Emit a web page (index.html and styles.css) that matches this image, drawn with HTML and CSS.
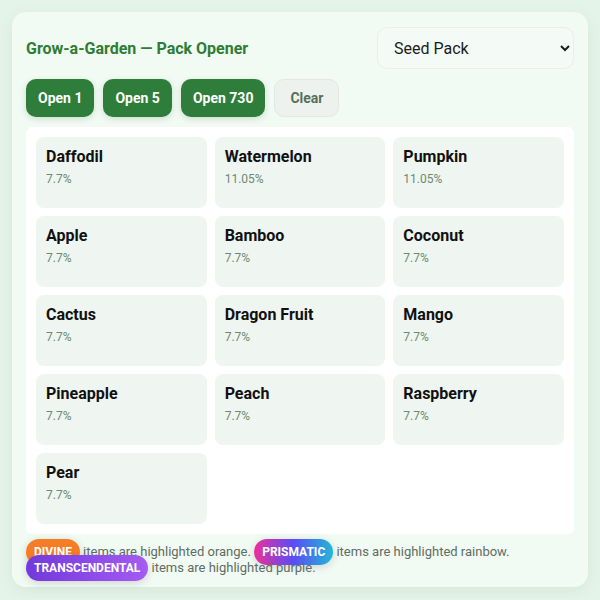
FILE: index.html
```html
<!DOCTYPE html>
<html lang="en">
<head>
    <meta charset="UTF-8">
    <meta name="viewport" content="width=device-width, initial-scale=1.0">
    <title>Grow-a-Garden Pack Opener</title>
    <link rel="stylesheet" href="styles.css">
</head>
<body>
    <div class="card">
        <div class="header">
            <h1>Grow-a-Garden — Pack Opener</h1>
            <select class="pack-select">
                <option>Seed Pack</option>
                <option>Exotic Pack</option>
            </select>
        </div>
        <div class="button-row">
            <button class="open-button">Open 1</button>
            <button class="open-button">Open 5</button>
            <button class="open-button">Open 730</button>
            <button class="clear-button">Clear</button>
        </div>
        <div class="item-grid">
            <div class="item"><div class="item-name">Daffodil</div><div class="item-chance">7.7%</div></div>
            <div class="item"><div class="item-name">Watermelon</div><div class="item-chance">11.05%</div></div>
            <div class="item"><div class="item-name">Pumpkin</div><div class="item-chance">11.05%</div></div>
            <div class="item"><div class="item-name">Apple</div><div class="item-chance">7.7%</div></div>
            <div class="item"><div class="item-name">Bamboo</div><div class="item-chance">7.7%</div></div>
            <div class="item"><div class="item-name">Coconut</div><div class="item-chance">7.7%</div></div>
            <div class="item"><div class="item-name">Cactus</div><div class="item-chance">7.7%</div></div>
            <div class="item"><div class="item-name">Dragon Fruit</div><div class="item-chance">7.7%</div></div>
            <div class="item"><div class="item-name">Mango</div><div class="item-chance">7.7%</div></div>
            <div class="item"><div class="item-name">Pineapple</div><div class="item-chance">7.7%</div></div>
            <div class="item"><div class="item-name">Peach</div><div class="item-chance">7.7%</div></div>
            <div class="item"><div class="item-name">Raspberry</div><div class="item-chance">7.7%</div></div>
            <div class="item"><div class="item-name">Pear</div><div class="item-chance">7.7%</div></div>
        </div>
        <p class="legend">
            <span class="badge divine">DIVINE</span> items are highlighted orange.
            <span class="badge prismatic">PRISMATIC</span> items are highlighted rainbow.
            <span class="badge transcendental">TRANSCENDENTAL</span> items are highlighted purple.
        </p>
    </div>
</body>
</html>
```

FILE: styles.css
```css
body {
    font-family: Roboto, "Noto Sans", sans-serif;
    background: #e5f4e9;
    margin: 0;
    padding: 12px;
}

.card {
    background: #f2faf4;
    border-radius: 14px;
    padding: 15px 14px 14px;
    height: 546px;
    box-shadow: 0 4px 16px rgba(40, 90, 50, 0.08);
}

.header {
    display: flex;
    justify-content: space-between;
    align-items: center;
}

.header h1 {
    margin: 0;
    font-size: 16px;
    font-weight: 700;
    color: #2e7d32;
}

.pack-select {
    width: 197px;
    height: 42px;
    padding: 0 8px 0 12px;
    font-family: Roboto, sans-serif;
    font-size: 16px;
    color: #1b1b1b;
    background: #f4fbf6;
    border: 1px solid #e6f0e8;
    border-radius: 10px;
    outline: none;
}

.button-row {
    display: flex;
    gap: 9px;
    margin-top: 10px;
}

.button-row button {
    height: 38px;
    padding: 0 12px;
    border-radius: 10px;
    font-family: Roboto, sans-serif;
    font-size: 14px;
    font-weight: 700;
    cursor: pointer;
}

.open-button {
    background: #2e7d3a;
    color: white;
    border: none;
    box-shadow: 0 2px 6px rgba(46, 125, 58, 0.2);
}

.button-row .clear-button {
    background: #eef2ee;
    color: #55705a;
    border: 1px solid #e2e8e2;
    padding: 0 15px;
}

.item-grid {
    display: grid;
    grid-template-columns: repeat(3, 1fr);
    gap: 8px;
    margin-top: 10px;
    padding: 10px;
    background: #ffffff;
    border-radius: 6px;
}

.item {
    height: 71px;
    box-sizing: border-box;
    padding: 10px;
    background: #eff5f0;
    border-radius: 8px;
}

.item-name {
    font-size: 16px;
    font-weight: 700;
    color: #111;
}

.item-chance {
    margin-top: 6px;
    font-size: 12px;
    color: #6b8a70;
}

.legend {
    margin: 10px 0 0;
    font-size: 13px;
    line-height: 16px;
    color: #5e6e62;
}

.badge {
    padding: 6px 8px;
    border-radius: 13px;
    font-size: 12px;
    font-weight: 700;
    color: white;
    box-shadow: 0 2px 8px rgba(0, 0, 0, 0.15);
}

.divine {
    background: #f57d25;
}

.prismatic {
    background: linear-gradient(90deg, #ee2f9a, #5a4cf6, #22b8d6);
}

.transcendental {
    background: linear-gradient(90deg, #7239dc, #a45bf2);
}
```
